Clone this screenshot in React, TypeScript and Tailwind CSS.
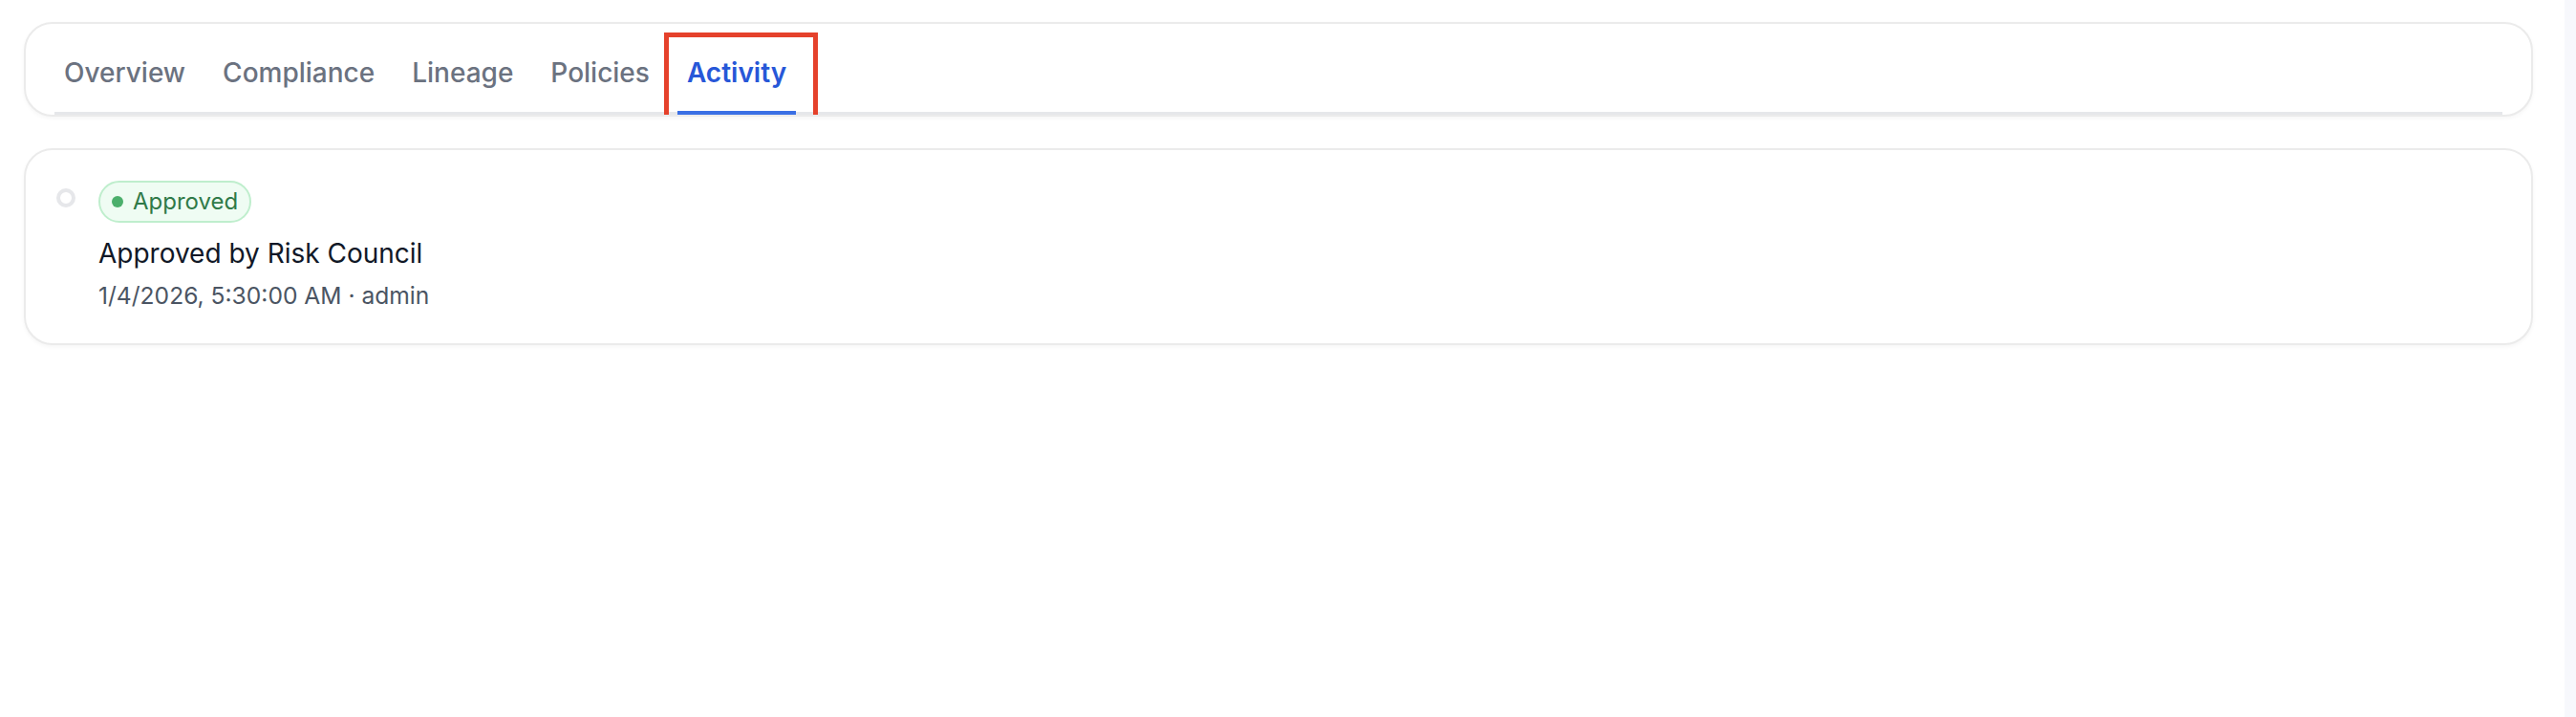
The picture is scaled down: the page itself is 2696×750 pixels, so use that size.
import { useState } from "react";

const tabs = ["Overview", "Compliance", "Lineage", "Policies", "Activity"];

const events = [
  {
    status: "Approved",
    title: "Approved by Risk Council",
    when: "1/4/2026, 5:30:00 AM",
    actor: "admin",
  },
];

export default function App() {
  const [active, setActive] = useState("Activity");

  return (
    <div className="flex min-h-[750px] bg-white font-['Inter','Noto_Sans',sans-serif]">
      <main className="flex-1 pl-[25px] pr-[33px] pt-[23px]">
        {/* tab bar */}
        <div className="overflow-hidden rounded-[30px] border-2 border-[#ebebeb] bg-white px-[30px] pt-[16px] shadow-[0_2px_4px_rgba(0,0,0,0.04)]">
          <div className="flex gap-[19px] border-b-[3px] border-[#e6e7ea]">
            {tabs.map((tab) => {
              const on = tab === active;
              return (
                <button
                  key={tab}
                  onClick={() => setActive(tab)}
                  className={
                    on
                      ? "relative -mb-[3px] border-b-4 border-[#3a6fe4] px-[10px] pt-[15px] pb-[20px] text-[28px] leading-[40px] font-semibold text-[#2757d8]"
                      : "relative -mb-[3px] border-b-4 border-transparent px-[10px] pt-[15px] pb-[20px] text-[28px] leading-[40px] font-medium text-[#6b7280]"
                  }
                >
                  {tab}
                  {on && (
                    <span className="pointer-events-none absolute -top-[7px] -left-[14px] -right-[23px] -bottom-[10px] border-[5px] border-[#e5412b]" />
                  )}
                </button>
              );
            })}
          </div>
        </div>

        {/* activity list */}
        <div className="mt-[33px] rounded-[30px] border-2 border-[#ebebeb] bg-white p-[32px] shadow-[0_2px_4px_rgba(0,0,0,0.04)]">
          {events.map((ev) => (
            <div key={ev.title} className="flex items-start gap-[24px]">
              <span className="mt-[8px] h-[20px] w-[20px] shrink-0 rounded-full border-[4px] border-[#e6e7ea] bg-white" />
              <div className="flex flex-col items-start">
                <span className="flex items-center gap-[10px] rounded-full border-2 border-[#bfeecd] bg-[#effcf3] px-[12px] py-[4px] text-[24px] leading-[32px] text-[#2f7a48]">
                  <span className="h-[12px] w-[12px] rounded-full bg-[#4caf6c]" />
                  {ev.status}
                </span>
                <p className="mt-[12px] text-[28px] leading-[40px] text-[#111827]">
                  {ev.title}
                </p>
                <p className="mt-[6px] text-[24.6px] leading-[36px] text-[#4b5563]">
                  {ev.when} · {ev.actor}
                </p>
              </div>
            </div>
          ))}
        </div>
      </main>
      <aside className="w-[12px] shrink-0 bg-[#f7f8fc]" />
    </div>
  );
}
